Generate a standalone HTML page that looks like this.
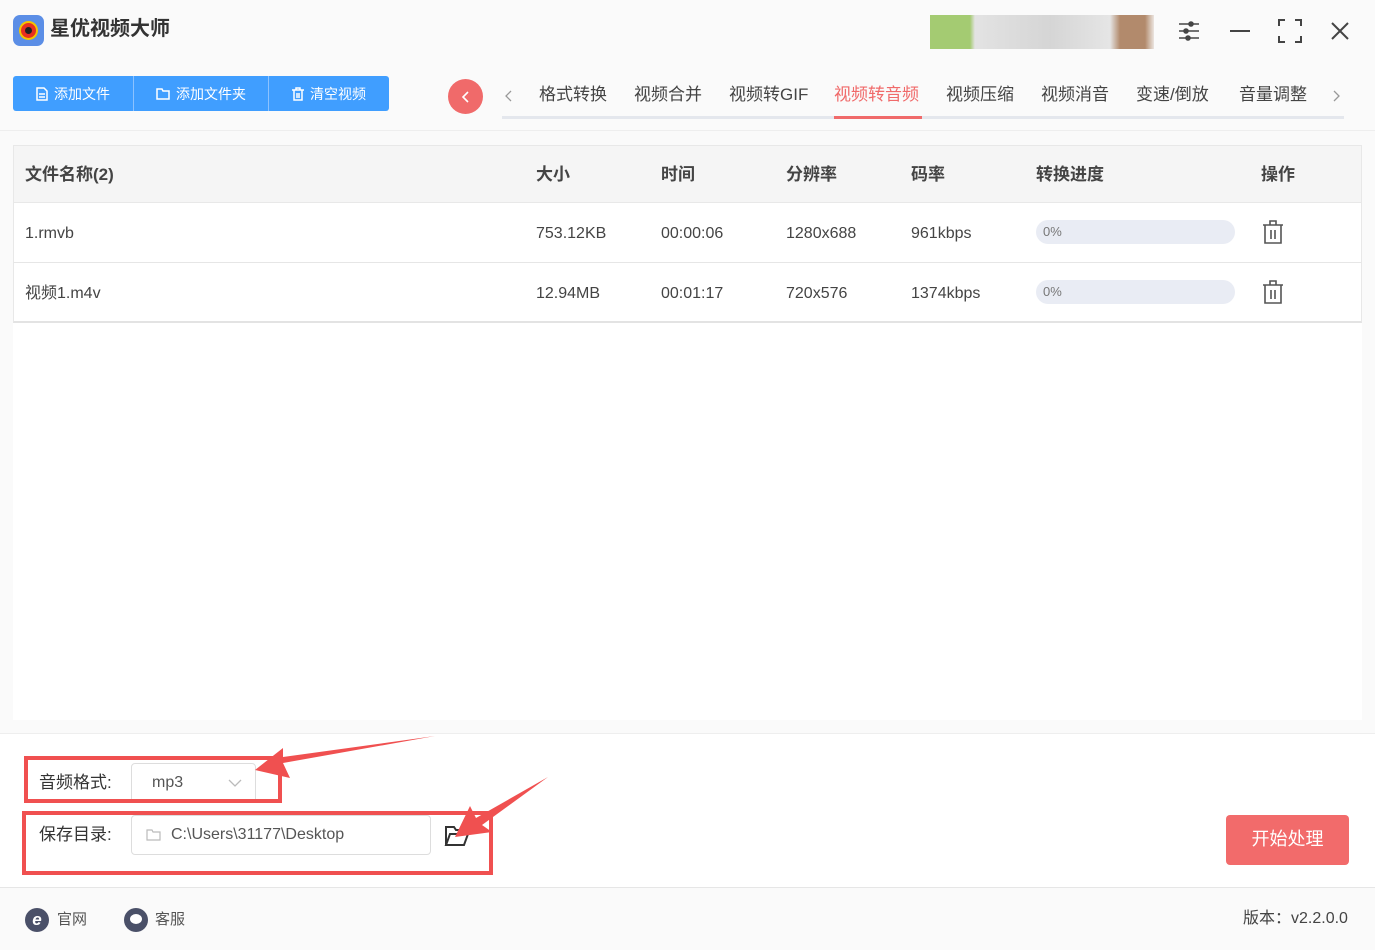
<!DOCTYPE html>
<html><head><meta charset="utf-8"><style>
*{margin:0;padding:0;box-sizing:border-box}
body{width:1375px;height:950px;background:#fafafa;font-family:"Liberation Sans","Noto Sans CJK SC",sans-serif;position:relative;overflow:hidden;color:#333;line-height:20px}
.abs{position:absolute}
.btns{left:13px;top:76px;height:35px;width:376px;background:#409eff;border-radius:3px;display:flex;color:#fff;font-size:14px}
.btns div{display:flex;align-items:center;justify-content:center;border-right:1px solid #8cc2ff;gap:6px}
.btns div:last-child{border-right:none}
.tab{top:85px;font-size:17px;color:#444}
.table{left:13px;top:145px;width:1349px;height:575px;background:#fff}
.hd{left:13px;top:145px;width:1349px;height:58px;background:#f5f5f5;border:1px solid #e8e8e8}
.th{top:165px;font-size:17px;font-weight:bold;color:#444}
.td{font-size:16px;color:#444}
.row{left:13px;width:1349px;height:60px;border-bottom:1px solid #e6e6e6}
.prog{width:199px;height:24px;border-radius:12px;background:#e9ecf4;font-size:13px;color:#777;padding:2px 0 0 7px}
</style></head><body>
<div class="abs" style="left:13px;top:15px;width:31px;height:31px;border-radius:7px;background:#5b8ee6"></div>
<div class="abs" style="left:19px;top:21px;width:19px;height:19px;border-radius:50%;background:#f5c400"></div>
<div class="abs" style="left:21px;top:23px;width:15px;height:15px;border-radius:50%;background:#e83020"></div>
<div class="abs" style="left:25px;top:27px;width:7px;height:7px;border-radius:50%;background:#222"></div>
<div class="abs" style="left:50px;top:18px;font-size:20px;font-weight:bold;color:#333;line-height:22px">星优视频大师</div>
<div class="abs" style="left:930px;top:15px;width:224px;height:34px;background:linear-gradient(90deg,#8fbf50 0,#8fbf50 40px,#ddd 45px,#ccc 120px,#e0e0e0 180px,#a06e48 190px,#a06e48 215px,#e8e0da 224px);opacity:.8"></div>
<svg class="abs" style="left:1176px;top:18px" width="26" height="26" viewBox="0 0 26 26" fill="none" stroke="#444" stroke-width="1.6"><path d="M3 6h20M3 13h20M3 20h20"/><circle cx="15" cy="6" r="2" fill="#444"/><circle cx="10" cy="13" r="2" fill="#444"/><circle cx="12" cy="20" r="2" fill="#444"/></svg>
<div class="abs" style="left:1230px;top:30px;width:20px;height:2px;background:#444"></div>
<svg class="abs" style="left:1278px;top:19px" width="24" height="24" fill="none" stroke="#444" stroke-width="2"><path d="M1 7V1h6M17 1h6v6M23 17v6h-6M7 23H1v-6"/></svg>
<svg class="abs" style="left:1330px;top:21px" width="20" height="20" stroke="#444" stroke-width="2"><path d="M2 2l16 16M18 2L2 18"/></svg>
<div class="abs btns">
<div style="width:121px"><svg width="12" height="14" fill="none" stroke="#fff" stroke-width="1.5"><path d="M1 1h7l3 3v9H1zM3 7h6M3 10h6"/></svg>添加文件</div>
<div style="width:135px"><svg width="14" height="12" fill="none" stroke="#fff" stroke-width="1.5"><path d="M1 1h5l1 2h6v8H1z"/></svg>添加文件夹</div>
<div style="width:120px"><svg width="12" height="14" fill="none" stroke="#fff" stroke-width="1.5"><path d="M0 3h12M4 3V1h4v2M2 3v10h8V3M5 6v5M7 6v5"/></svg>清空视频</div></div>
<div class="abs" style="left:448px;top:79px;width:35px;height:35px;border-radius:50%;background:#f06a6a"></div>
<svg class="abs" style="left:461px;top:91px" width="10" height="12" fill="none" stroke="#fff" stroke-width="1.6"><path d="M7 1L2 6l5 5"/></svg>
<svg class="abs" style="left:505px;top:90px" width="8" height="12" fill="none" stroke="#999" stroke-width="1.3"><path d="M6 1L1 6l5 5"/></svg>
<svg class="abs" style="left:1332px;top:90px" width="8" height="12" fill="none" stroke="#999" stroke-width="1.3"><path d="M2 1l5 5-5 5"/></svg>
<div class="abs" style="left:502px;top:116px;width:842px;height:3px;background:#e4e7ed"></div>
<div class="abs" style="left:834px;top:116px;width:88px;height:3px;background:#f06a6a"></div>
<div class="abs tab" style="left:539px">格式转换</div>
<div class="abs tab" style="left:634px">视频合并</div>
<div class="abs tab" style="left:729px">视频转GIF</div>
<div class="abs tab" style="left:834px;color:#f06a6a">视频转音频</div>
<div class="abs tab" style="left:946px">视频压缩</div>
<div class="abs tab" style="left:1041px">视频消音</div>
<div class="abs tab" style="left:1136px">变速/倒放</div>
<div class="abs tab" style="left:1239px">音量调整</div>
<div class="abs" style="left:0;top:130px;width:1375px;height:1px;background:#eee"></div>
<div class="abs table"></div>
<div class="abs hd"></div>
<div class="abs th" style="left:25px">文件名称(2)</div>
<div class="abs th" style="left:536px">大小</div>
<div class="abs th" style="left:661px">时间</div>
<div class="abs th" style="left:786px">分辨率</div>
<div class="abs th" style="left:911px">码率</div>
<div class="abs th" style="left:1036px">转换进度</div>
<div class="abs th" style="left:1261px">操作</div>
<div class="abs row" style="top:203px;border-left:1px solid #e8e8e8;border-right:1px solid #e8e8e8"></div>
<div class="abs row" style="top:263px;border-left:1px solid #e8e8e8;border-right:1px solid #e8e8e8;border-bottom:2px solid #e3e3e3"></div>
<div class="abs td" style="left:25px;top:224px">1.rmvb</div>
<div class="abs td" style="left:536px;top:224px">753.12KB</div>
<div class="abs td" style="left:661px;top:224px">00:00:06</div>
<div class="abs td" style="left:786px;top:224px">1280x688</div>
<div class="abs td" style="left:911px;top:224px">961kbps</div>
<div class="abs prog" style="left:1036px;top:220px">0%</div>
<div class="abs td" style="left:25px;top:284px">视频1.m4v</div>
<div class="abs td" style="left:536px;top:284px">12.94MB</div>
<div class="abs td" style="left:661px;top:284px">00:01:17</div>
<div class="abs td" style="left:786px;top:284px">720x576</div>
<div class="abs td" style="left:911px;top:284px">1374kbps</div>
<div class="abs prog" style="left:1036px;top:280px">0%</div>
<svg class="abs" style="left:1262px;top:220px" width="22" height="24" fill="none" stroke="#555" stroke-width="1.6"><path d="M1 5h20M8 5V1h6v4M3 5v18h16V5M9 10v9M13 10v9"/></svg>
<svg class="abs" style="left:1262px;top:280px" width="22" height="24" fill="none" stroke="#555" stroke-width="1.6"><path d="M1 5h20M8 5V1h6v4M3 5v18h16V5M9 10v9M13 10v9"/></svg>
<div class="abs" style="left:0;top:733px;width:1375px;height:155px;background:#fff;border-top:1px solid #eee;border-bottom:1px solid #e6e6e6"></div>
<div class="abs" style="left:39px;top:773px;font-size:17px">音频格式:</div>
<div class="abs" style="left:131px;top:763px;width:125px;height:40px;border:1px solid #ddd;border-radius:4px;font-size:16px;color:#555;padding:9px 0 0 20px">mp3</div>
<svg class="abs" style="left:228px;top:779px" width="14" height="8" fill="none" stroke="#bbb" stroke-width="1.3"><path d="M1 1l6 6 6-6"/></svg>
<div class="abs" style="left:39px;top:825px;font-size:17px">保存目录:</div>
<div class="abs" style="left:131px;top:815px;width:300px;height:40px;border:1px solid #ddd;border-radius:4px;font-size:16px;color:#555;padding:9px 0 0 39px">C:\Users\31177\Desktop</div>
<svg class="abs" style="left:146px;top:829px" width="15" height="12" fill="none" stroke="#bbb" stroke-width="1.2"><path d="M1 1h5l1 2h7v8H1z"/></svg>
<svg class="abs" style="left:444px;top:825px" width="26" height="22" fill="none" stroke="#333" stroke-width="2"><path d="M2 20V2h8l2 3h8v4M2 20h18l4-11H6z"/></svg>
<div class="abs" style="left:24px;top:756px;width:258px;height:47px;border:4px solid #f05050"></div>
<div class="abs" style="left:22px;top:811px;width:471px;height:64px;border:4px solid #f05050"></div>
<svg class="abs" style="left:0;top:0" width="1375" height="950"><polygon points="435,736 283,763 290,778 255,770 283,748 283,757" fill="#f05050"/><polygon points="548,777 482,825 492,832 455,837 470,806 476,818" fill="#f05050"/></svg>
<div class="abs" style="left:1226px;top:815px;width:123px;height:50px;background:#f26b6b;border-radius:4px;color:#fff;font-size:18px;text-align:center;line-height:48px">开始处理</div>
<div class="abs" style="left:25px;top:908px;width:24px;height:24px;border-radius:50%;background:#4a5068;color:#fff;font-weight:bold;font-size:17px;text-align:center;line-height:23px;font-style:italic">e</div>
<div class="abs" style="left:57px;top:910px;font-size:15px;color:#555">官网</div>
<div class="abs" style="left:124px;top:908px;width:24px;height:24px;border-radius:50%;background:#4a5068"></div>
<div class="abs" style="left:130px;top:914px;width:12px;height:10px;border-radius:50%;background:#fff"></div>
<div class="abs" style="left:155px;top:910px;font-size:15px;color:#555">客服</div>
<div class="abs" style="left:1243px;top:909px;font-size:16px;color:#444">版本：v2.2.0.0</div>
</body></html>
